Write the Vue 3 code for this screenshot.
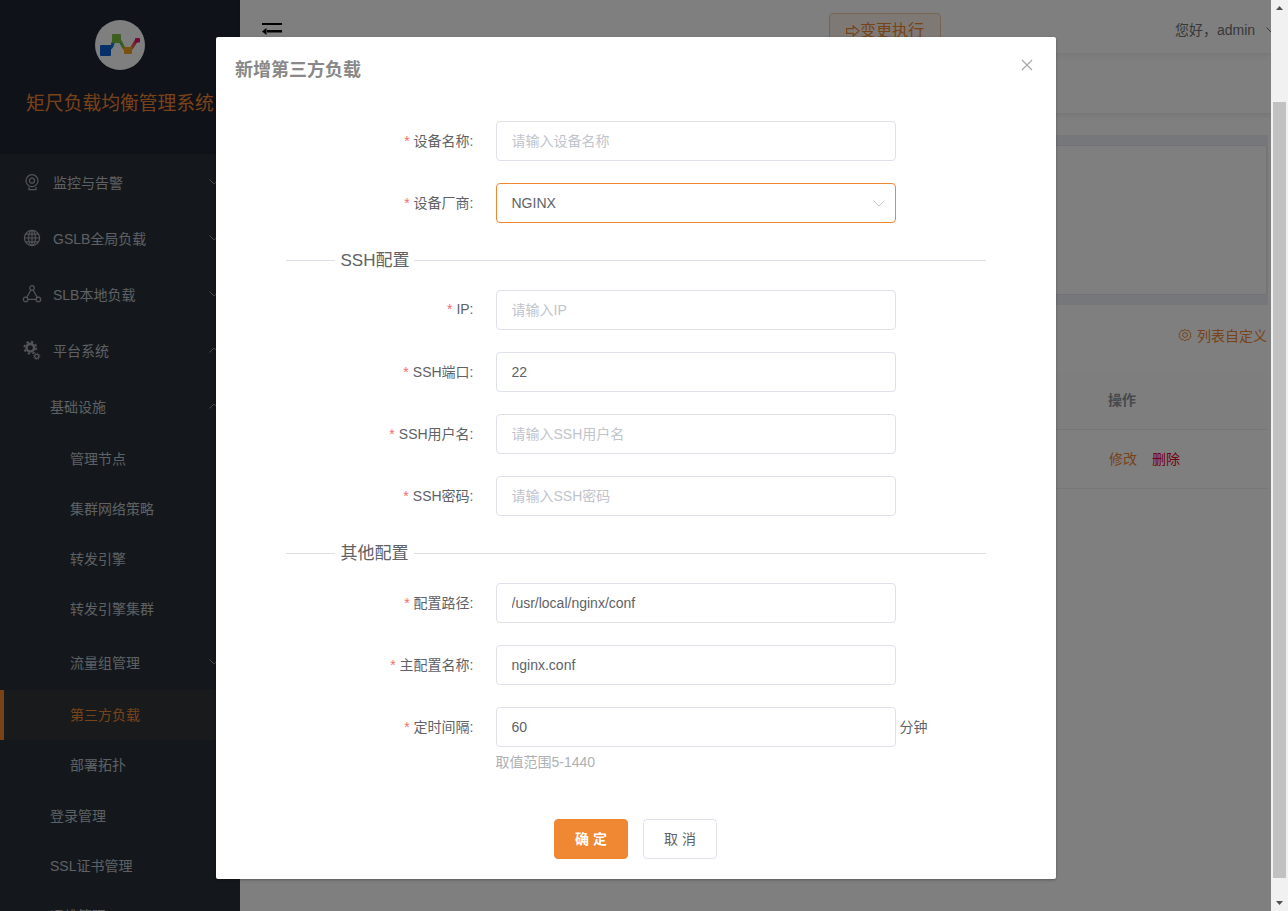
<script setup>
const topMenus = [
  { text: '监控与告警', icon: 'cam', open: false },
  { text: 'GSLB全局负载', icon: 'globe', open: false },
  { text: 'SLB本地负载', icon: 'tri', open: false },
  { text: '平台系统', icon: 'gear', open: true }
]
const infra = ['管理节点', '集群网络策略', '转发引擎', '转发引擎集群']
const firstGroup = [
  { label: '设备名称', placeholder: '请输入设备名称', value: '' }
]
const sshGroup = [
  { label: 'IP', placeholder: '请输入IP', value: '' },
  { label: 'SSH端口', placeholder: '', value: '22' },
  { label: 'SSH用户名', placeholder: '请输入SSH用户名', value: '' },
  { label: 'SSH密码', placeholder: '请输入SSH密码', value: '' }
]
const otherGroup = [
  { label: '配置路径', placeholder: '', value: '/usr/local/nginx/conf' },
  { label: '主配置名称', placeholder: '', value: 'nginx.conf' }
]
</script>

<template>
  <div class="root">
    <div class="viewport">
      <aside class="sidebar">
        <div class="brand">
          <svg class="logo" width="50" height="50" viewBox="0 0 50 50">
            <defs>
              <linearGradient id="lg" x1="0" y1="0" x2="1" y2="0">
                <stop offset="0" stop-color="#0a6fe0" />
                <stop offset=".3" stop-color="#2fa0a0" />
                <stop offset=".5" stop-color="#86c23c" />
                <stop offset=".72" stop-color="#f0a820" />
                <stop offset="1" stop-color="#e01070" />
              </linearGradient>
            </defs>
            <circle cx="25" cy="25" r="25" fill="#fff" />
            <path d="M15 28C19 27 17 18 21.500 18.500C27 18.500 27 31 33 30.500C37 30.500 38 24 42 20" fill="none" stroke="url(#lg)" stroke-width="3.200" />
            <rect x="5" y="25" width="11" height="11" rx="1" fill="#0a62d0" />
            <rect x="17" y="14" width="9" height="9" rx="1" fill="#7cbc3e" />
            <rect x="29" y="27" width="8" height="7" rx="1" fill="#eea41e" />
            <rect x="40" y="18" width="5" height="4.500" rx="1" fill="#e01070" />
          </svg>
          <div class="brand-title">矩尺负载均衡管理系统</div>
        </div>
        <nav class="menu">
          <div v-for="m in topMenus" :key="m.text" class="row row-top">
            <svg v-if="m.icon === 'cam'" class="ico" width="20" height="20" viewBox="0 0 20 20" fill="none" stroke="#a3a7ad" stroke-width="1.2">
              <circle cx="10" cy="8.7" r="6" />
              <circle cx="10" cy="8.7" r="2.5" />
              <path d="M7 15v2.6h7V15" />
            </svg>
            <svg v-else-if="m.icon === 'globe'" class="ico" width="20" height="20" viewBox="0 0 20 20" fill="none" stroke="#a3a7ad" stroke-width="1.2">
              <circle cx="10" cy="10" r="7.6" />
              <ellipse cx="10" cy="10" rx="3.4" ry="7.6" />
              <path d="M2.4 10h15.2M3.4 6.2h13.2M3.4 13.8h13.2M10 2.4v15.2" />
            </svg>
            <svg v-else-if="m.icon === 'tri'" class="ico" width="20" height="20" viewBox="0 0 20 20" fill="none" stroke="#a3a7ad" stroke-width="1.2">
              <circle cx="10" cy="4" r="2.3" />
              <circle cx="3.6" cy="15.4" r="2.3" />
              <circle cx="16.4" cy="15.4" r="2.3" />
              <path d="M8.9 6 4.8 13.4M11.1 6l4.1 7.4M5.9 15.4h8.2" />
            </svg>
            <svg v-else class="ico" width="20" height="20" viewBox="0 0 20 20" fill="none" stroke="#a3a7ad">
              <circle cx="8.3" cy="7.7" r="3.8" stroke-width="2.6" />
              <circle cx="8.3" cy="7.7" r="6" stroke-width="1.8" stroke-dasharray="2.4 2.31" />
              <circle cx="14.7" cy="16.3" r="2" stroke-width="1.2" />
              <circle cx="14.7" cy="16.3" r="3.1" stroke-width="1" stroke-dasharray="1.2 1.23" />
            </svg>
            <span>{{ m.text }}</span>
            <svg class="chev" :class="{ up: m.open }" width="10" height="6" viewBox="0 0 10 6" fill="none" stroke="#8c9096"><path d="M.5.5 5 5 9.5.5" /></svg>
          </div>
          <div class="row row-top lvl2">
            <span>基础设施</span>
            <svg class="chev up" width="10" height="6" viewBox="0 0 10 6" fill="none" stroke="#8c9096"><path d="M.5.5 5 5 9.5.5" /></svg>
          </div>
          <div v-for="t in infra" :key="t" class="row row-item lvl3 lift">{{ t }}</div>
          <div class="row row-top lvl3">
            <span>流量组管理</span>
            <svg class="chev" width="10" height="6" viewBox="0 0 10 6" fill="none" stroke="#8c9096"><path d="M.5.5 5 5 9.5.5" /></svg>
          </div>
          <div class="row row-item lvl3 lift active">第三方负载</div>
          <div class="row row-item lvl3 lift">部署拓扑</div>
          <div class="row row-item lvl2">登录管理</div>
          <div class="row row-item lvl2">SSL证书管理</div>
          <div class="row row-item lvl2">运维管理</div>
        </nav>
      </aside>

      <main class="main">
        <header class="topbar">
          <svg class="burger" width="20" height="14" viewBox="0 0 20 14" fill="#000">
            <rect y="0" width="20" height="2" />
            <rect x="5" y="7" width="15" height="2.500" />
            <path d="M4.500 5V12L0 8.500Z" />
          </svg>
          <button class="exec">
            <svg width="14" height="12" viewBox="0 0 14 12" fill="none" stroke="#f08733" stroke-width="1.2"><path d="M.6 3.6h6.6V1l6 5-6 5V8.400H.6Z" /></svg>
            <span>变更执行</span>
          </button>
          <div class="user">
            <span>您好，admin</span>
            <svg width="10" height="6" viewBox="0 0 10 6" fill="none" stroke="#777"><path d="M.5.5 5 5 9.5.5" /></svg>
          </div>
        </header>
        <div class="tabs"></div>
        <section class="filter-wrap">
          <div class="filter-card"></div>
        </section>
        <div class="toolbar">
          <svg width="14" height="14" viewBox="0 0 14 14" fill="none" stroke="#f08733">
            <circle cx="7" cy="7" r="2.4" />
            <path d="M7 1.4 8.6 2.6 10.6 2.4 11.4 4.3 13 5.5 12.4 7.4 13 9 11.4 10 10.6 11.8 8.6 11.6 7 12.8 5.4 11.6 3.4 11.8 2.6 10 1 9 1.6 7.4 1 5.5 2.6 4.3 3.4 2.4 5.4 2.6Z" />
          </svg>
          <span>列表自定义</span>
        </div>
        <div class="table">
          <div class="thead"><span class="op-col th">操作</span></div>
          <div class="tbody">
            <span class="op-col"><a class="edit">修改</a><a class="del">删除</a></span>
          </div>
        </div>
      </main>

      <div class="mask">
        <div class="dialog">
          <div class="dialog-head">
            <span class="dialog-title">新增第三方负载</span>
            <svg class="close" width="12" height="12" viewBox="0 0 12 12" stroke="#a6a6a6" stroke-width="1.1"><path d="M1 1l10 10M11 1 1 11" /></svg>
          </div>
          <form class="form">
            <div v-for="f in firstGroup" :key="f.label" class="item">
              <label class="lab"><i>*</i>{{ f.label }}:</label>
              <input class="inp" :placeholder="f.placeholder" :value="f.value" readonly />
            </div>
            <div class="item">
              <label class="lab"><i>*</i>设备厂商:</label>
              <div class="select">
                <span>NGINX</span>
                <svg width="12" height="7" viewBox="0 0 12 7" fill="none" stroke="#c4c7cf"><path d="M.5.5 6 6 11.500.5" /></svg>
              </div>
            </div>
            <div class="divider"><b></b><span>SSH配置</span><b></b></div>
            <div v-for="f in sshGroup" :key="f.label" class="item">
              <label class="lab"><i>*</i>{{ f.label }}:</label>
              <input class="inp" :placeholder="f.placeholder" :value="f.value" readonly />
            </div>
            <div class="divider"><b></b><span>其他配置</span><b></b></div>
            <div v-for="f in otherGroup" :key="f.label" class="item">
              <label class="lab"><i>*</i>{{ f.label }}:</label>
              <input class="inp" :placeholder="f.placeholder" :value="f.value" readonly />
            </div>
            <div class="item item-last">
              <label class="lab"><i>*</i>定时间隔:</label>
              <input class="inp" value="60" readonly />
              <span class="unit">分钟</span>
            </div>
            <div class="hint">取值范围5-1440</div>
          </form>
          <div class="foot">
            <button class="btn primary" type="button">确 定</button>
            <button class="btn" type="button">取 消</button>
          </div>
        </div>
      </div>
    </div>

    <div class="scrollbar">
      <svg class="arrow" width="17" height="17" viewBox="0 0 17 17" fill="#505050"><path d="M8.500 6 12 10H5Z" /></svg>
      <div class="track"><div class="thumb"></div></div>
      <svg class="arrow" width="17" height="17" viewBox="0 0 17 17" fill="#505050"><path d="M5 7h7l-3.500 4Z" /></svg>
    </div>
  </div>
</template>

<style>
html, body { margin: 0; height: 100%; overflow: hidden; }
</style>

<style scoped>
.root {
  display: flex;
  width: 1288px;
  height: 911px;
  overflow: hidden;
  font-family: "Liberation Sans", "Noto Sans CJK SC", sans-serif;
  font-size: 14px;
  color: #606266;
  background: #fff;
}
.viewport {
  position: relative;
  display: flex;
  width: 1271px;
  height: 911px;
  overflow: hidden;
}
.sidebar {
  width: 240px;
  flex: none;
  background: #283039;
  color: #bcc0c6;
  overflow: hidden;
}
.brand {
  display: flex;
  flex-direction: column;
  align-items: center;
  height: 154px;
  padding-top: 20px;
  box-sizing: border-box;
  background: #1e2430;
}
.logo { display: block; }
.brand-title {
  margin-top: 21px;
  font-size: 18.8px;
  line-height: 26px;
  color: #f08733;
  white-space: nowrap;
}
.row {
  position: relative;
  display: flex;
  align-items: center;
  box-sizing: border-box;
  padding-left: 53px;
}
.row-top { height: 56px; }
.row-item { height: 50px; }
.lvl2 { padding-left: 50px; }
.lvl3 { padding-left: 70px; }
.lift { padding-bottom: 2px; }
.ico {
  position: absolute;
  left: 22px;
  top: 18px;
}
.chev {
  position: absolute;
  left: 209px;
  top: 25px;
}
.chev.up { transform: rotate(180deg); }
.active {
  background: #333436;
  color: #f08733;
  border-left: 4px solid #f08733;
  padding-left: 66px;
}
.main {
  flex: 1;
  min-width: 0;
  display: flex;
  flex-direction: column;
}
.topbar {
  position: relative;
  height: 53px;
  flex: none;
  display: flex;
  align-items: flex-start;
  box-shadow: 0 2px 5px rgba(0, 0, 0, .08);
}
.burger {
  margin: 23px 0 0 22px;
}
.exec {
  display: flex;
  align-items: center;
  justify-content: center;
  gap: 0;
  width: 112px;
  height: 38px;
  margin: 13px 0 0 547px;
  padding: 0 0 2px;
  border: 1px solid #f3c8a3;
  border-radius: 4px;
  background: #fdf3ea;
  color: #f08733;
  font: inherit;
  font-size: 16px;
  line-height: 34px;
}
.user {
  position: absolute;
  left: 935px;
  top: 20px;
  display: flex;
  align-items: center;
  gap: 11px;
  color: #6f7174;
  white-space: nowrap;
  line-height: 20px;
}
.tabs {
  height: 53px;
  flex: none;
  margin-top: 7px;
  box-shadow: 0 2px 6px rgba(0, 0, 0, .1);
}
.filter-wrap {
  flex: none;
  margin: 22px 3px 0 0;
  padding: 10px 1px 10px 0;
  background: #edeff4;
}
.filter-card {
  height: 148px;
  background: #fff;
  border: 1px solid #e4e6ea;
  border-radius: 3px;
}
.toolbar {
  display: flex;
  justify-content: flex-end;
  align-items: center;
  gap: 5px;
  flex: none;
  height: 20px;
  margin: 20px 4px 1px 0;
  color: #f08733;
}
.table {
  flex: none;
  margin: 28px 3px 0 0;
}
.thead {
  height: 55px;
  box-sizing: content-box;
  display: flex;
  align-items: center;
  padding-bottom: 0;
  background: #fcfcfc;
  border-bottom: 1px solid #ebeef5;
}
.th { position: relative; top: -3px; }
.tbody {
  height: 58px;
  display: flex;
  align-items: center;
  border-bottom: 1px solid #ebeef5;
}
.op-col {
  margin-left: 868px;
  white-space: nowrap;
}
.tbody .op-col { margin-bottom: 2px; }
.th {
  font-weight: 700;
  color: #909399;
}
.edit { color: #f08733; margin-left: 1px; }
.del { color: #e6001f; margin-left: 15px; }

.mask {
  position: absolute;
  inset: 0;
  background: rgba(0, 0, 0, .5);
  display: flex;
  justify-content: center;
  align-items: flex-start;
  padding-top: 37px;
}
.dialog {
  width: 840px;
  height: 842px;
  box-sizing: border-box;
  background: #fff;
  border-radius: 2px;
  box-shadow: 0 1px 3px rgba(0, 0, 0, .3);
}
.dialog-head {
  position: relative;
  height: 84px;
  padding: 20px 0 0 19.500px;
  box-sizing: border-box;
}
.dialog-title {
  font-size: 18px;
  line-height: 26px;
  font-weight: 700;
  color: #888;
}
.close {
  position: absolute;
  right: 23px;
  top: 22px;
}
.form {
  width: 700px;
  margin: 0 auto;
}
.item {
  display: flex;
  align-items: center;
  height: 40px;
  margin-bottom: 22px;
}
.item-last { margin-bottom: 0; }
.lab {
  width: 210px;
  flex: none;
  box-sizing: border-box;
  padding: 0 22px 2px 0;
  text-align: right;
  white-space: nowrap;
}
.lab i {
  font-style: normal;
  color: #f56c6c;
  margin-right: 4px;
}
.inp, .select {
  width: 400px;
  height: 40px;
  box-sizing: border-box;
  border: 1px solid #dfe1ea;
  border-radius: 4px;
  padding: 0 15px;
  font: inherit;
  color: #606266;
  background: #fff;
  outline: none;
}
.inp::placeholder { color: #c0c4cc; opacity: 1; }
.select {
  display: flex;
  align-items: center;
  justify-content: space-between;
  border-color: #f08733;
  padding-right: 10px;
}
.unit { margin-left: 4px; padding-bottom: 2px; }
.divider {
  display: flex;
  align-items: center;
  height: 30px;
  margin-bottom: 15px;
  font-size: 17px;
}
.divider b {
  flex: 1;
  height: 1px;
  background: #dcdfe6;
}
.divider b:first-child {
  flex: none;
  width: 49px;
}
.divider span {
  margin: 0 5px 3px 6px;
  white-space: nowrap;
}
.hint {
  margin: 5px 0 0 210px;
  line-height: 20px;
  color: #aeb0b4;
}
.foot {
  display: flex;
  justify-content: center;
  gap: 15px;
  margin-top: 47px;
}
.btn {
  width: 74px;
  height: 40px;
  box-sizing: border-box;
  border: 1px solid #dfe1ea;
  border-radius: 4px;
  background: #fff;
  color: #606266;
  font: inherit;
  padding: 0 0 2px;
}
.primary {
  background: #f08733;
  border-color: #f08733;
  color: #fff;
  font-weight: 700;
}
.scrollbar {
  width: 17px;
  flex: none;
  display: flex;
  flex-direction: column;
  background: #f1f1f1;
}
.arrow { flex: none; display: block; }
.track { flex: 1; position: relative; }
.thumb {
  position: absolute;
  left: 2px;
  right: 2px;
  top: 85px;
  height: 776px;
  background: #c1c1c1;
}
</style>
